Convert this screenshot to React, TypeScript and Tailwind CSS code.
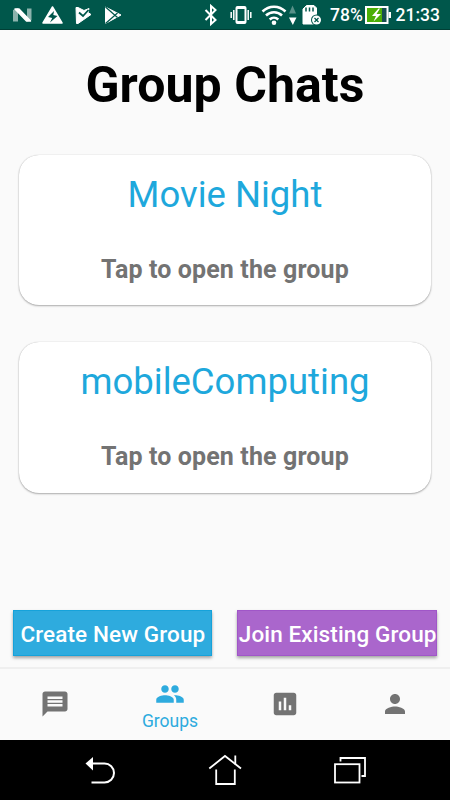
import React, { useState } from 'react';
import { MdGroup, MdMessage, MdPerson, MdPoll } from 'react-icons/md';

const groups = ['Movie Night', 'mobileComputing'];

const tabs = [
  { label: 'Chats', icon: MdMessage },
  { label: 'Groups', icon: MdGroup },
  { label: 'Polls', icon: MdPoll },
  { label: 'Profile', icon: MdPerson },
];

const StatusBar = () => (
  <div className="flex h-[30px] items-center border-b border-[#003f35] bg-[#00574b] pl-3 text-white">
    {/* notifications */}
    <svg className="h-[30px] w-[22px]" viewBox="0 0 22 30" fill="#fff">
      <path d="M1 10l5-2v13.500H1z M15 8.500h4.500V20L15 21.500z" opacity=".55" />
      <path d="M3 9h4l11.500 12h-4z" stroke="#fff" strokeWidth="1.500" strokeLinejoin="round" />
    </svg>
    <svg className="ml-2 h-[30px] w-[22px]" viewBox="0 0 22 30">
      <path d="M10.500 7L20 23H1z" fill="#fff" stroke="#fff" strokeWidth="1.500" strokeLinejoin="round" />
      <path d="M12 11l-6 6 4.200 1-2.200 4.500 7.500-6.500-4.200-1z" fill="#00574b" />
    </svg>
    <svg className="ml-[10px] h-[30px] w-[20px]" viewBox="0 0 20 30">
      <path d="M2 7.500h2l6 3 5-2-1 4 3 2L4 23.500H2.500z" fill="#fff" stroke="#fff" strokeLinejoin="round" />
      <path d="M5 12.500l4 3.500 5.500-6" fill="none" stroke="#00574b" strokeWidth="1.800" />
    </svg>
    <svg className="ml-[10px] h-[30px] w-[20px]" viewBox="0 0 20 30">
      <path d="M1.500 7l15.500 8L1.500 23.500z" fill="#fff" stroke="#fff" strokeLinejoin="round" />
      <path d="M1.500 7l12 10.500M1.500 23.500l12-10.500" fill="none" stroke="#00574b" strokeWidth="1.200" />
    </svg>

    {/* bluetooth, vibrate, wifi, data, sd card */}
    <svg className="ml-[79px] h-[30px] w-[16px]" viewBox="0 0 16 30" fill="none" stroke="#fff" strokeWidth="2">
      <path d="M2.500 10l10 10L8 24V6l4.500 4-10 10" />
    </svg>
    <svg className="ml-[11px] h-[30px] w-[23px]" viewBox="0 0 23 30" fill="none" stroke="#fff">
      <rect x="6.500" y="7" width="9" height="16" rx="1" strokeWidth="2" />
      <path d="M7 8h8M7 22h8" strokeWidth="2" />
      <path d="M3.800 10v10M18.200 10v10" strokeWidth="1.500" />
      <path d="M1.200 12v6M20.800 12v6" strokeWidth="1.500" />
    </svg>
    <svg className="ml-[8px] h-[30px] w-[26px]" viewBox="0 0 26 30" fill="none" stroke="#fff" strokeWidth="2.500">
      <path d="M1.500 11.500c6.500-6.500 16.500-6.500 23 0" />
      <path d="M5 15.500c4.500-4.500 11.500-4.500 16 0" />
      <path d="M8.700 19.500c2.500-2.500 6-2.500 8.600 0" />
      <circle cx="13" cy="22.700" r="2.300" fill="#fff" stroke="none" />
    </svg>
    <svg className="ml-[2px] h-[30px] w-[8px]" viewBox="0 0 8 30" fill="#fff">
      <path d="M0 13.500l3.500-8 3.500 8z" opacity=".35" />
      <path d="M0 17.500h7.500l-3.700 7.500z" />
    </svg>
    <svg className="ml-[5px] h-[30px] w-[20px]" viewBox="0 0 20 30">
      <path d="M4.500 5.500H12l2.500 2.500v16H1V9z" fill="#fff" stroke="#fff" strokeLinejoin="round" />
      <path d="M4 7.500v4M7.500 7.500v4M11 7.500v4" stroke="#00574b" strokeWidth="1.500" />
      <circle cx="14.500" cy="20" r="5.500" fill="#00574b" />
      <circle cx="14.500" cy="20" r="4.500" fill="#fff" />
      <path d="M12.500 18l4 4m0-4l-4 4" stroke="#00574b" strokeWidth="1.200" />
    </svg>

    <span className="ml-2 w-[34px] whitespace-nowrap pt-[3px] text-[17.500px] font-medium leading-none">78%</span>
    <svg className="ml-px h-[30px] w-[28px]" viewBox="0 0 28 30">
      <rect x="1" y="7" width="21.500" height="16" fill="#174f50" stroke="#fff" strokeWidth="2" />
      <rect x="2" y="8" width="15" height="14" fill="#4caf05" />
      <path d="M23.500 12h2.500v6h-2.500z" fill="#fff" />
      <path d="M13.500 8.500L7 16h4l-2.500 5.500L16 14h-4.500l3.500-5.500z" fill="#fff" />
    </svg>
    <span className="ml-[2.500px] pt-[3px] text-[17.500px] font-medium leading-none">21:33</span>
  </div>
);

const GroupCard = ({ name }: { name: string }) => (
  <button className="flex h-[150.500px] w-full flex-col items-center rounded-[20px] bg-white shadow-[0_1px_2px_rgba(0,0,0,0.3),0_0_1px_rgba(0,0,0,0.25)]">
    <span className="mt-[18px] text-[36.500px] leading-[44px] text-[#1ea8dc]">{name}</span>
    <span className="mt-[38px] text-[25px] font-bold leading-[30px] tracking-[0.13px] text-[#737373]">
      Tap to open the group
    </span>
  </button>
);

const SystemNav = () => (
  <div className="flex h-[60px] items-center bg-black pl-[84px]">
    <svg className="h-[32px] w-[32px]" viewBox="0 0 32 32" fill="none" stroke="#fff" strokeWidth="2">
      <path d="M8 9.500h12.500a9.500 9.500 0 0 1 0 19H7.500" />
      <path d="M1.500 9.500L9 3v13.500z" fill="#fff" stroke="none" />
    </svg>
    <svg className="ml-[92px] h-[32px] w-[34px]" viewBox="0 0 34 32" fill="none" stroke="#fff" strokeWidth="1.800">
      <path d="M1.300 14.500L17 2l16 12.500" />
      <path d="M8.200 15.500V30h18.600V15.500M27.300 1.500v9" />
    </svg>
    <svg className="ml-[91px] h-[32px] w-[34px]" viewBox="0 0 34 32" fill="none" stroke="#fff" strokeWidth="1.800">
      <rect x="2" y="10.200" width="24.500" height="18.300" />
      <path d="M7.500 7.500V4h24.500v18H28.500" />
    </svg>
  </div>
);

const App = () => {
  const [active, setActive] = useState('Groups');

  return (
    <div className="flex h-[800px] w-[450px] flex-col overflow-hidden bg-[#fafafa] font-['Roboto',sans-serif]">
      <StatusBar />

      <main className="flex flex-1 flex-col">
        <h1 className="mt-[25px] text-center text-[50px] font-bold leading-[60px] tracking-[0.05px] text-black">
          Group Chats
        </h1>

        <div className="mt-[39.500px] flex flex-col gap-[37px] px-[19px]">
          {groups.map((name) => (
            <GroupCard key={name} name={name} />
          ))}
        </div>

        <div className="mb-[11px] mt-auto flex gap-[25.300px] pl-[12.600px]">
          <button className="flex h-[46px] w-[199.500px] items-center justify-center whitespace-nowrap border border-[#16a2da] bg-[#2eabde] pl-px pt-[3px] text-[22.500px] font-medium leading-none tracking-[0.12px] text-white shadow-[0_2px_3px_rgba(0,0,0,0.35)]">
            Create New Group
          </button>
          <button className="flex h-[46px] w-[199.500px] items-center justify-center whitespace-nowrap border border-[#a056c8] bg-[#aa66cc] pl-px pt-[3px] text-[22.500px] font-medium leading-none tracking-[0.12px] text-white shadow-[0_2px_3px_rgba(0,0,0,0.35)]">
            Join Existing Group
          </button>
        </div>
      </main>

      <nav className="grid h-[73px] grid-cols-[110px_120px_110px_110px] border-t-2 border-[#efefef] bg-[#fafafa]">
        {tabs.map(({ label, icon: Icon }) => (
          <button
            key={label}
            onClick={() => setActive(label)}
            className={`flex flex-col items-center justify-center ${active === label ? 'pt-[2px] text-[#2eabde]' : 'pb-px text-[#737373]'}`}
          >
            <Icon size={30} />
            {active === label && <span className="mt-px text-[17.500px] leading-[22px]">{label}</span>}
          </button>
        ))}
      </nav>

      <SystemNav />
    </div>
  );
};

export default App;
